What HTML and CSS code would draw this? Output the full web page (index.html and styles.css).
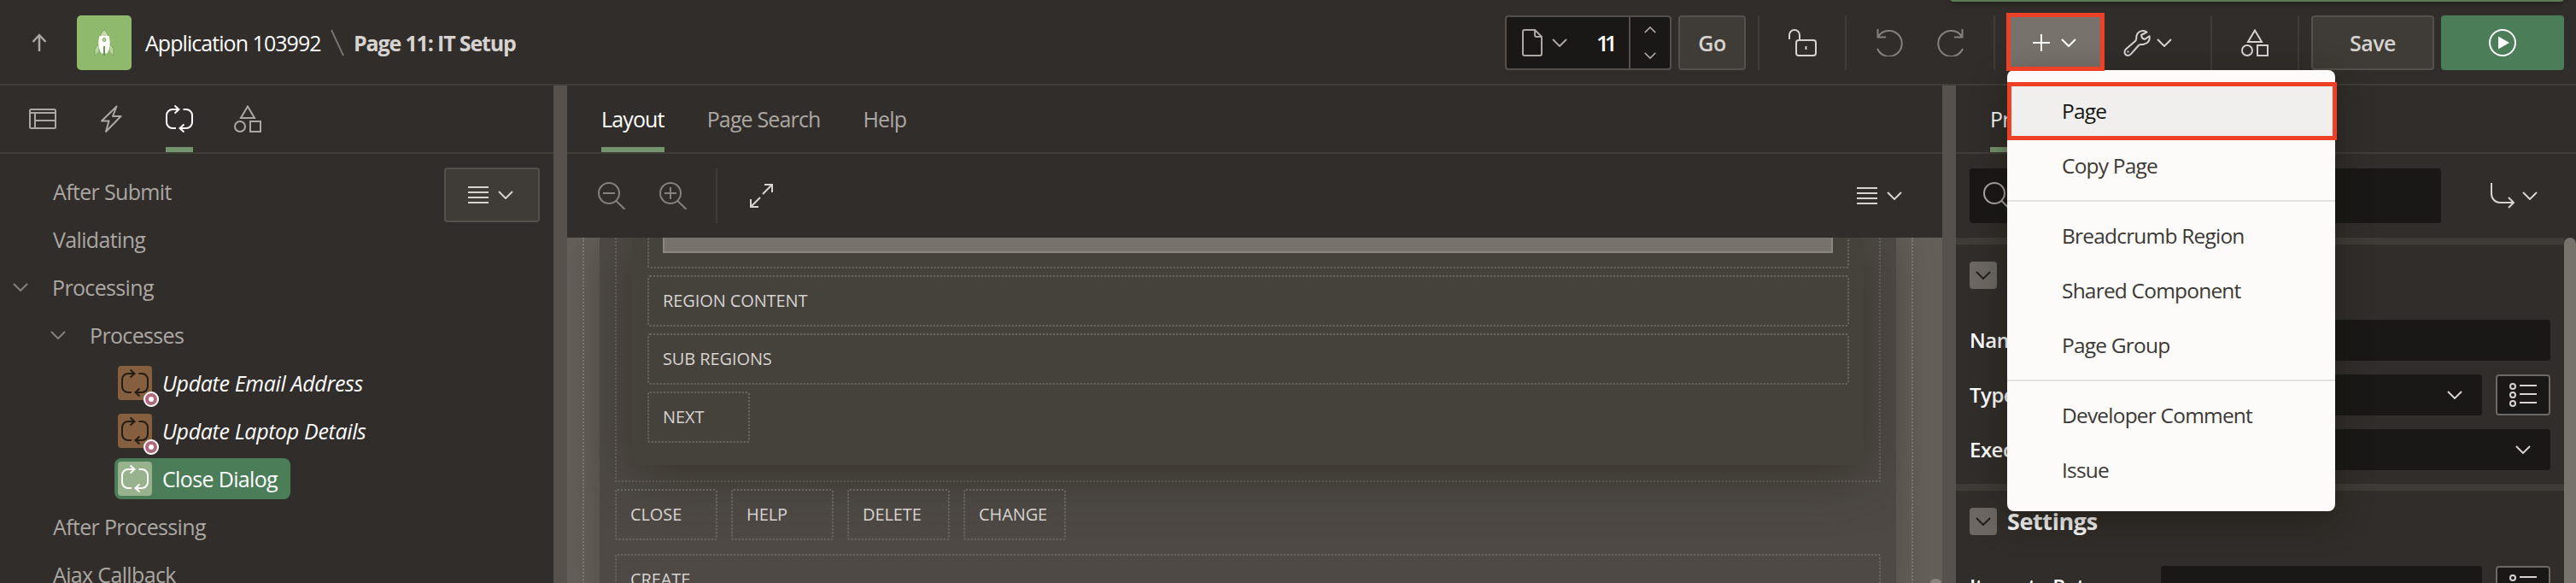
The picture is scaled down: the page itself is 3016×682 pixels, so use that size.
FILE: index.html
```html
<!DOCTYPE html>
<html lang="en">
<head>
<meta charset="utf-8">
<title>Page Designer</title>
<link rel="stylesheet" href="styles.css">
</head>
<body>
<svg class="defs" width="0" height="0">
  <symbol id="chev" viewBox="0 0 18 10"><path d="M1 1l8 8 8-8"/></symbol>
  <symbol id="lines" viewBox="0 0 24 20"><path d="M0 1h24M0 7h24M0 13h24M0 19h24"/></symbol>
  <symbol id="shapes" viewBox="0 0 32 32"><path d="M16 1.500L24 15H8z"/><circle cx="7" cy="25" r="6"/><path d="M19 19h12v12H19z"/></symbol>
  <symbol id="process" viewBox="0 0 32 32"><path d="M15 5H8a7 7 0 0 0-7 7v8a7 7 0 0 0 7 7h4M20.500 5H24a7 7 0 0 1 7 7v8a7 7 0 0 1-7 7h-7M10.500.500L15.500 5l-5 4.500M21.500 22.500l-5 4.500 5 4.500"/></symbol>
  <symbol id="list" viewBox="0 0 32 28"><circle cx="4" cy="4" r="3"/><circle cx="4" cy="14" r="3"/><circle cx="4" cy="24" r="3"/><path d="M12 3h20M12 13h20M12 23h20"/></symbol>
  <symbol id="glass" viewBox="0 0 32 32"><circle cx="13" cy="13" r="12"/><path d="M21.500 22l10 10"/></symbol>
</svg>

<header class="header">
  <svg class="icon up" width="18" height="22" viewBox="0 0 18 22"><path d="M9 21V2M1.500 10L9 2l7.500 8"/></svg>
  <span class="app-icon">
    <svg width="24" height="32" viewBox="0 0 24 32">
      <path d="M6 17L1 23v8l5-4zM18 17l5 6v8l-5-4z" fill="#b9d69f" stroke="#7ea35f"/>
      <path d="M12 1C8.500 4 7 8 6 11h12c-1-3-2.500-7-6-10z" fill="#c4dcae" stroke="#7ea35f"/>
      <path d="M6.500 8C4.500 16 5 24 9 28.500h6C19 24 19.500 16 17.500 8z" fill="#fff"/>
      <circle cx="12" cy="12.500" r="2" fill="#b9d69f" stroke="#7ea35f"/>
      <path d="M12 20v11" stroke="#6c9350" stroke-width="2"/>
    </svg>
  </span>
  <span class="crumb">Application 103992</span>
  <svg class="slash" width="16" height="32" viewBox="0 0 16 32"><path d="M1 1l14 30"/></svg>
  <span class="crumb current">Page 11: IT Setup</span>

  <div class="tools">
    <div class="page-combo">
      <div class="page-pick">
        <svg class="icon dim" width="24" height="32" viewBox="0 0 24 32"><path d="M3 1h12l8 8v20a2 2 0 0 1-2 2H3a2 2 0 0 1-2-2V3a2 2 0 0 1 2-2zM15 1v6a2 2 0 0 0 2 2h6"/></svg>
        <svg class="icon dim" width="18" height="10"><use href="#chev"/></svg>
        <span>11</span>
      </div>
      <div class="spin">
        <svg class="icon dim flip" width="14" height="8"><use href="#chev"/></svg>
        <svg class="icon dim" width="14" height="8"><use href="#chev"/></svg>
      </div>
    </div>
    <button class="btn go">Go</button>
    <i class="rule r1"></i>
    <svg class="icon lock" width="34" height="32" viewBox="0 0 34 32"><rect x="10" y="13" width="23" height="18" rx="3"/><path d="M2 12V7a6 6 0 0 1 12 0v6M21.500 20v4"/></svg>
    <i class="rule r2"></i>
    <svg class="icon faint undo" width="31" height="32" viewBox="0 0 31 32"><path d="M1.500 0v9.500H11M2 9A15 15 0 1 1 1 23"/></svg>
    <svg class="icon faint redo" width="31" height="32" viewBox="0 0 31 32"><path d="M29.500 0v9.500H20M29 9A15 15 0 1 0 30 23"/></svg>
    <i class="rule r3"></i>
    <div class="create">
      <svg class="icon white" width="20" height="20" viewBox="0 0 20 20"><path d="M10 0v20M0 10h20"/></svg>
      <svg class="icon white" width="18" height="10"><use href="#chev"/></svg>
    </div>
    <svg class="icon wrench" width="32" height="32" viewBox="0 0 32 32"><path stroke-linejoin="round" d="M27.500 3.500C24 .500 17 2 15.500 8c-.4 2.500.3 4-1.500 6L3 23.500c-3 3-1 7.500 2.500 7.500 1.500 0 2.500-.6 3.500-1.800L18 19c2-1.500 4-.5 6-1.200 5-1 7.500-5 6.500-9.600L25 12l-3-1.500-1-3.500z"/><path d="M5.500 25.500v2"/></svg>
    <svg class="icon wrench-chev" width="18" height="10"><use href="#chev"/></svg>
    <i class="rule r4"></i>
    <svg class="icon shared" width="32" height="32"><use href="#shapes"/></svg>
    <i class="rule r5"></i>
    <button class="btn save">Save</button>
    <button class="btn run"><svg class="icon white" width="32" height="32" viewBox="0 0 32 32"><circle cx="16" cy="16" r="15"/><path d="M11 8.500v15L24 16z" fill="#fff" stroke="none"/></svg></button>
  </div>
</header>
<div class="toast"></div>

<main class="body">
  <section class="left">
    <nav class="tabs icon-tabs">
      <span class="tab"><svg class="icon dim" width="32" height="24" viewBox="0 0 32 24"><rect x="1" y="1" width="30" height="22" rx="1.500"/><path d="M1 5h30M7 5v18M7 14h24"/></svg></span>
      <span class="tab"><svg class="icon dim" width="32" height="32" viewBox="0 0 32 32"><path d="M22.500 1.500L5 18.500h8.500L10 31l17.500-18H18z" stroke-linejoin="round"/></svg></span>
      <span class="tab on"><svg class="icon white" width="32" height="32"><use href="#process"/></svg></span>
      <span class="tab"><svg class="icon dim" width="32" height="32"><use href="#shapes"/></svg></span>
    </nav>
    <div class="tree-wrap">
      <ul class="tree">
        <li class="l1"><span>After Submit</span></li>
        <li class="l1"><span>Validating</span></li>
        <li class="l1 open"><svg class="icon faint" width="18" height="10"><use href="#chev"/></svg><span>Processing</span></li>
        <li class="l2"><svg class="icon faint" width="18" height="10"><use href="#chev"/></svg><span>Processes</span></li>
        <li class="l3"><span class="node"><span class="pic"><svg class="icon" width="32" height="32"><use href="#process"/></svg><i class="badge"></i></span><em>Update Email Address</em></span></li>
        <li class="l3"><span class="node"><span class="pic"><svg class="icon" width="32" height="32"><use href="#process"/></svg><i class="badge"></i></span><em>Update Laptop Details</em></span></li>
        <li class="l3"><span class="node sel"><span class="pic"><svg class="icon" width="32" height="32"><use href="#process"/></svg></span><span>Close Dialog</span></span></li>
        <li class="l1"><span>After Processing</span></li>
        <li class="l1"><span>Ajax Callback</span></li>
      </ul>
      <button class="btn tree-menu"><svg class="icon" width="24" height="20"><use href="#lines"/></svg><svg class="icon" width="18" height="10"><use href="#chev"/></svg></button>
    </div>
  </section>
  <div class="splitter"></div>
  <section class="center">
    <nav class="tabs text-tabs">
      <span class="tab on">Layout</span>
      <span class="tab">Page Search</span>
      <span class="tab">Help</span>
    </nav>
    <div class="bar">
      <svg class="icon faint" width="32" height="32" viewBox="0 0 32 32"><use href="#glass"/><path d="M6 13h14"/></svg>
      <svg class="icon faint zin" width="32" height="32" viewBox="0 0 32 32"><use href="#glass"/><path d="M6 13h14M13 6v14"/></svg>
      <i class="rule"></i>
      <svg class="icon" width="27" height="28" viewBox="0 0 27 28"><path d="M17 1h9v9M26 1L15 12M10 27H1v-9M1 27l11-11"/></svg>
      <span class="bar-menu"><svg class="icon" width="24" height="20"><use href="#lines"/></svg><svg class="icon" width="18" height="10"><use href="#chev"/></svg></span>
    </div>
    <div class="canvas">
      <div class="frame">
        <div class="dialog">
          <div class="slot outer">
            <div class="region">
              <div class="slot items"><div class="item"></div></div>
              <div class="slot">REGION CONTENT</div>
              <div class="slot">SUB REGIONS</div>
              <div class="slot small">NEXT</div>
            </div>
          </div>
          <div class="row">
            <div class="slot small">CLOSE</div>
            <div class="slot small">HELP</div>
            <div class="slot small">DELETE</div>
            <div class="slot small">CHANGE</div>
          </div>
          <div class="slot last">CREATE</div>
        </div>
      </div>
      <div class="thumb"></div>
    </div>
  </section>
  <div class="splitter"></div>
  <section class="right">
    <nav class="tabs text-tabs"><span class="tab on">Process</span></nav>
    <div class="search-row">
      <div class="search"><svg class="icon dim" width="32" height="32"><use href="#glass"/></svg></div>
      <svg class="icon goto" width="28" height="30" viewBox="0 0 28 30"><path d="M1 0v13a10 10 0 0 0 10 10h16M21 17l6 6-6 6"/></svg>
      <svg class="icon" width="18" height="10"><use href="#chev"/></svg>
    </div>
    <div class="props">
      <div class="groups">
        <div class="group g1">
          <h2><i class="fold"><svg class="icon" width="18" height="10"><use href="#chev"/></svg></i></h2>
          <div class="prop"><label>Name</label><div class="field"></div></div>
          <div class="prop"><label>Type</label><div class="field"><svg class="icon" width="18" height="10"><use href="#chev"/></svg></div><div class="pick"><svg class="icon" width="32" height="28"><use href="#list"/></svg></div></div>
          <div class="prop"><label>Execution</label><div class="field"><svg class="icon" width="18" height="10"><use href="#chev"/></svg></div></div>
        </div>
        <div class="group">
          <h2><i class="fold"><svg class="icon" width="18" height="10"><use href="#chev"/></svg></i><span>Settings</span></h2>
          <div class="prop"><label>Items to Return</label><div class="field"></div><div class="pick"><svg class="icon" width="32" height="28"><use href="#list"/></svg></div></div>
        </div>
      </div>
      <div class="scroll"></div>
    </div>
  </section>
</main>

<div class="menu">
  <div class="mi hot">Page</div>
  <div class="mi">Copy Page</div>
  <hr>
  <div class="mi">Breadcrumb Region</div>
  <div class="mi">Shared Component</div>
  <div class="mi">Page Group</div>
  <hr>
  <div class="mi">Developer Comment</div>
  <div class="mi">Issue</div>
</div>
<div class="mark mark-button"></div>
<div class="mark mark-item"></div>
</body>
</html>
```
FILE: styles.css
```css
* { box-sizing: border-box; }
body { margin: 0; width: 3016px; height: 682px; overflow: hidden; position: relative; background: #312d2a; color: #fff; font: 25px/32px "Open Sans", "Noto Sans", sans-serif; }
.defs { position: absolute; }
.icon { fill: none; stroke: #d6d3d0; stroke-width: 2; flex: none; display: block; }
.icon.dim { stroke: #aba7a3; }
.icon.faint { stroke: #85817c; }
.icon.white { stroke: #fff; }
span, em, label { white-space: nowrap; }

.header { height: 100px; border-bottom: 2px solid #403c38; display: flex; align-items: center; padding-left: 37px; }
.header > * { margin-top: 2px; }
.up { stroke-width: 2.500; stroke: #aba7a3; }
.app-icon { width: 64px; height: 64px; margin-left: 35px; border-radius: 5px; background: #8fb96d; display: flex; align-items: center; justify-content: center; }
.crumb { margin-left: 16px; width: 205px; letter-spacing: -.95px; font-weight: 500; }
.slash { margin-left: 12px; fill: none; stroke: #77726e; stroke-width: 2; }
.crumb.current { margin-left: 11px; font-weight: 700; color: #d6d3d0; letter-spacing: -1.150px; }

.tools { margin-left: auto; width: 1254px; display: flex; align-items: center; flex: none; }
.page-combo { width: 195px; height: 64px; border: 2px solid #55504b; border-radius: 4px; background: #191816; display: flex; }
.page-pick { width: 145px; border-right: 2px solid #55504b; display: flex; align-items: center; padding-left: 18px; font-size: 26px; }
.page-pick svg + svg { margin-left: 11px; }
.page-pick span { margin-left: 34px; letter-spacing: -5px; font-weight: 600; }
.spin { flex: 1; display: flex; flex-direction: column; align-items: center; justify-content: center; gap: 22px; }
.flip { transform: scaleY(-1); }
.btn { height: 64px; border: 2px solid #55504b; border-radius: 4px; background: #3f3c37; color: #d6d3d0; font: 600 25px/32px "Open Sans", "Noto Sans", sans-serif; letter-spacing: -.5px; display: flex; align-items: center; justify-content: center; padding: 0; flex: none; }
.go { width: 79px; margin-left: 8px; }
.rule { width: 2px; height: 64px; background: #403c38; flex: none; }
.r1 { margin-left: 14px; }
.lock { margin-left: 33px; }
.r2 { margin-left: 33px; }
.undo { margin-left: 35px; }
.redo { margin-left: 40px; }
.r3 { margin-left: 35px; }
.create { margin-left: 14px; width: 112px; height: 64px; background: #78726d; display: flex; align-items: center; gap: 13px; padding-left: 30px; }
.wrench { margin-left: 24px; }
.wrench-chev { margin-left: 7px; }
.r4 { margin-left: 45px; }
.shared { margin-left: 34px; }
.r5 { margin-left: 34px; }
.save { width: 144px; margin-left: 14px; }
.run { width: 144px; margin-left: 8px; background: #4a7d58; border: 0; }
.toast { position: absolute; left: 2283px; top: -10px; width: 719px; height: 12px; border-radius: 4px; background: #5d7c55; box-shadow: 0 2px 6px rgba(0,0,0,.3); }

.body { display: flex; height: 582px; }
.splitter { width: 16px; background: #57514d; flex: none; }
.left { width: 648px; flex: none; }
.center { width: 1610px; flex: none; display: flex; flex-direction: column; }
.right { width: 726px; flex: none; display: flex; flex-direction: column; }

.tabs { height: 80px; border-bottom: 2px solid #403c38; display: flex; flex: none; }
.tab { display: flex; align-items: center; height: 78px; padding-top: 6px; border-bottom: 6px solid transparent; color: #aba7a3; letter-spacing: -.850px; }
.tab.on { border-bottom-color: #73946c; color: #fff; font-weight: 500; }
.icon-tabs { padding-left: 34px; gap: 48px; }
.icon-tabs .tab { width: 32px; }
.text-tabs { padding-left: 40px; gap: 50px; }

.tree-wrap { display: flex; align-items: flex-start; height: 502px; overflow: hidden; }
.tree { list-style: none; margin: 0; padding: 16px 0 0; width: 520px; color: #aba7a3; letter-spacing: -.650px; }
.tree li { height: 56px; display: flex; align-items: center; }
.l1 { padding-left: 62px; }
.tree .open { padding-left: 15px; }
.open span { margin-left: 28px; }
.l2 { padding-left: 59px; }
.l2 span { margin-left: 28px; }
.l3 { padding-left: 134px; color: #fff; font-weight: 500; }
.l3 em { letter-spacing: -.350px; }
.node { display: flex; align-items: center; height: 48px; padding: 0 0 0 4px; border-radius: 8px; }
.node.sel { background: #4a7d58; width: 206px; }
.pic { position: relative; width: 40px; height: 40px; margin-right: 12px; border-radius: 4px; background: #855f3e; display: flex; align-items: center; justify-content: center; flex: none; }
.pic .icon { stroke: #231d18; }
.sel .pic { background: #97b28c; }
.sel .pic .icon { stroke: #fff; }
.badge { position: absolute; left: 30px; top: 30px; width: 18px; height: 18px; border-radius: 50%; background: #fff; border: 6px solid #b0697c; outline: 2px solid #fff; outline-offset: -2px; }
.tree-menu { width: 112px; gap: 11px; margin-top: 16px; padding-right: 3px; }

.bar { height: 98px; display: flex; align-items: center; padding: 0 47px 0 36px; flex: none; }
.zin { margin-left: 40px; }
.bar .rule { margin: 0 38px 0 34px; }
.bar-menu { margin-left: auto; display: flex; align-items: center; gap: 11px; }

.canvas { flex: 1; min-height: 0; overflow: hidden; background: #66605b; position: relative; padding: 0 34px 0 18px; font-size: 20px; color: #d6d3d0; }
.frame { height: 440px; border: 2px dotted #84807b; border-width: 0 2px; padding: 0 18px; }
.dialog { height: 440px; background: #4e4945; padding: 0 18px; box-shadow: 0 0 50px rgba(50,45,40,.4); }
.slot { border: 2px dotted #6b6762; border-radius: 3px; height: 60px; padding: 0 16px; display: flex; align-items: center; letter-spacing: -.1px; font-weight: 500; }
.slot.outer { height: 286px; border-top: 0; padding: 0 18px; display: block; border-radius: 0; }
.region { height: 266px; background: #45413b; border-radius: 0 0 8px 8px; padding: 0 17px 0 18px; display: flex; flex-direction: column; gap: 8px; box-shadow: 0 12px 60px rgba(50,46,38,.75); }
.slot.items { height: 36px; border-top: 0; padding: 0 17px 0 16px; align-items: flex-start; }
.item { flex: 1; height: 18px; background: #78726d; border: 2px solid #8b8680; border-top: 0; }
.slot.small { width: 120px; flex: none; }
.row { display: flex; gap: 16px; margin-top: 8px; position: relative; }
.slot.last { margin-top: 16px; }
.thumb { position: absolute; right: 0; top: 399px; width: 15px; height: 30px; border-radius: 8px; background: #8a8481; }

.search-row { height: 98px; display: flex; align-items: center; padding-left: 16px; flex: none; }
.search { width: 552px; height: 64px; border-radius: 4px; background: #191816; display: flex; align-items: center; padding-left: 16px; }
.goto { margin: 0 9px 0 58px; }
.props { display: flex; flex: 1; min-height: 0; overflow: hidden; }
.groups { width: 712px; }
.group { border-top: 8px solid #3f3b37; padding: 20px 16px 0; }
.g1 { height: 288px; }
.group h2 { margin: 0; height: 32px; display: flex; gap: 12px; font-size: 27px; line-height: 32px; align-items: center; letter-spacing: -.4px; }
.fold { width: 32px; height: 32px; border-radius: 4px; background: #6d6863; display: flex; align-items: center; justify-content: center; }
.fold .icon { stroke: #231f1c; }
.prop { height: 48px; margin-bottom: 16px; display: flex; gap: 16px; align-items: center; letter-spacing: -.5px; }
h2 + .prop { margin-top: 36px; }
.prop label { width: 208px; font-weight: 600; font-size: 24px; }
.field { flex: 1; height: 48px; border-radius: 4px; background: #191816; display: flex; align-items: center; justify-content: flex-end; padding-right: 23px; }
.pick { width: 64px; height: 48px; border: 2px solid #6d6863; border-radius: 4px; background: #191816; display: flex; align-items: center; justify-content: center; }
.scroll { width: 14px; height: 420px; border-radius: 7px; background: #78726d; }

.menu { position: absolute; left: 2350px; top: 82px; width: 384px; height: 516px; padding: 16px 0; border-radius: 8px; background: #fcfbf9; color: #3b3835; box-shadow: 0 10px 40px rgba(20,20,10,.45); }
.mi { height: 64px; padding-left: 64px; display: flex; align-items: center; font-size: 24.500px; letter-spacing: -.8px; font-weight: 500; }
.mi.hot { background: #f0efed; color: #161513; }
.menu hr { margin: 8px 0; height: 2px; border: 0; background: #e4e2df; }
.mark { position: absolute; border: 5px solid #ec4127; }
.mark-button { left: 2349px; top: 15px; width: 115px; height: 68px; }
.mark-item { left: 2350px; top: 96px; width: 386px; height: 68px; }
```
